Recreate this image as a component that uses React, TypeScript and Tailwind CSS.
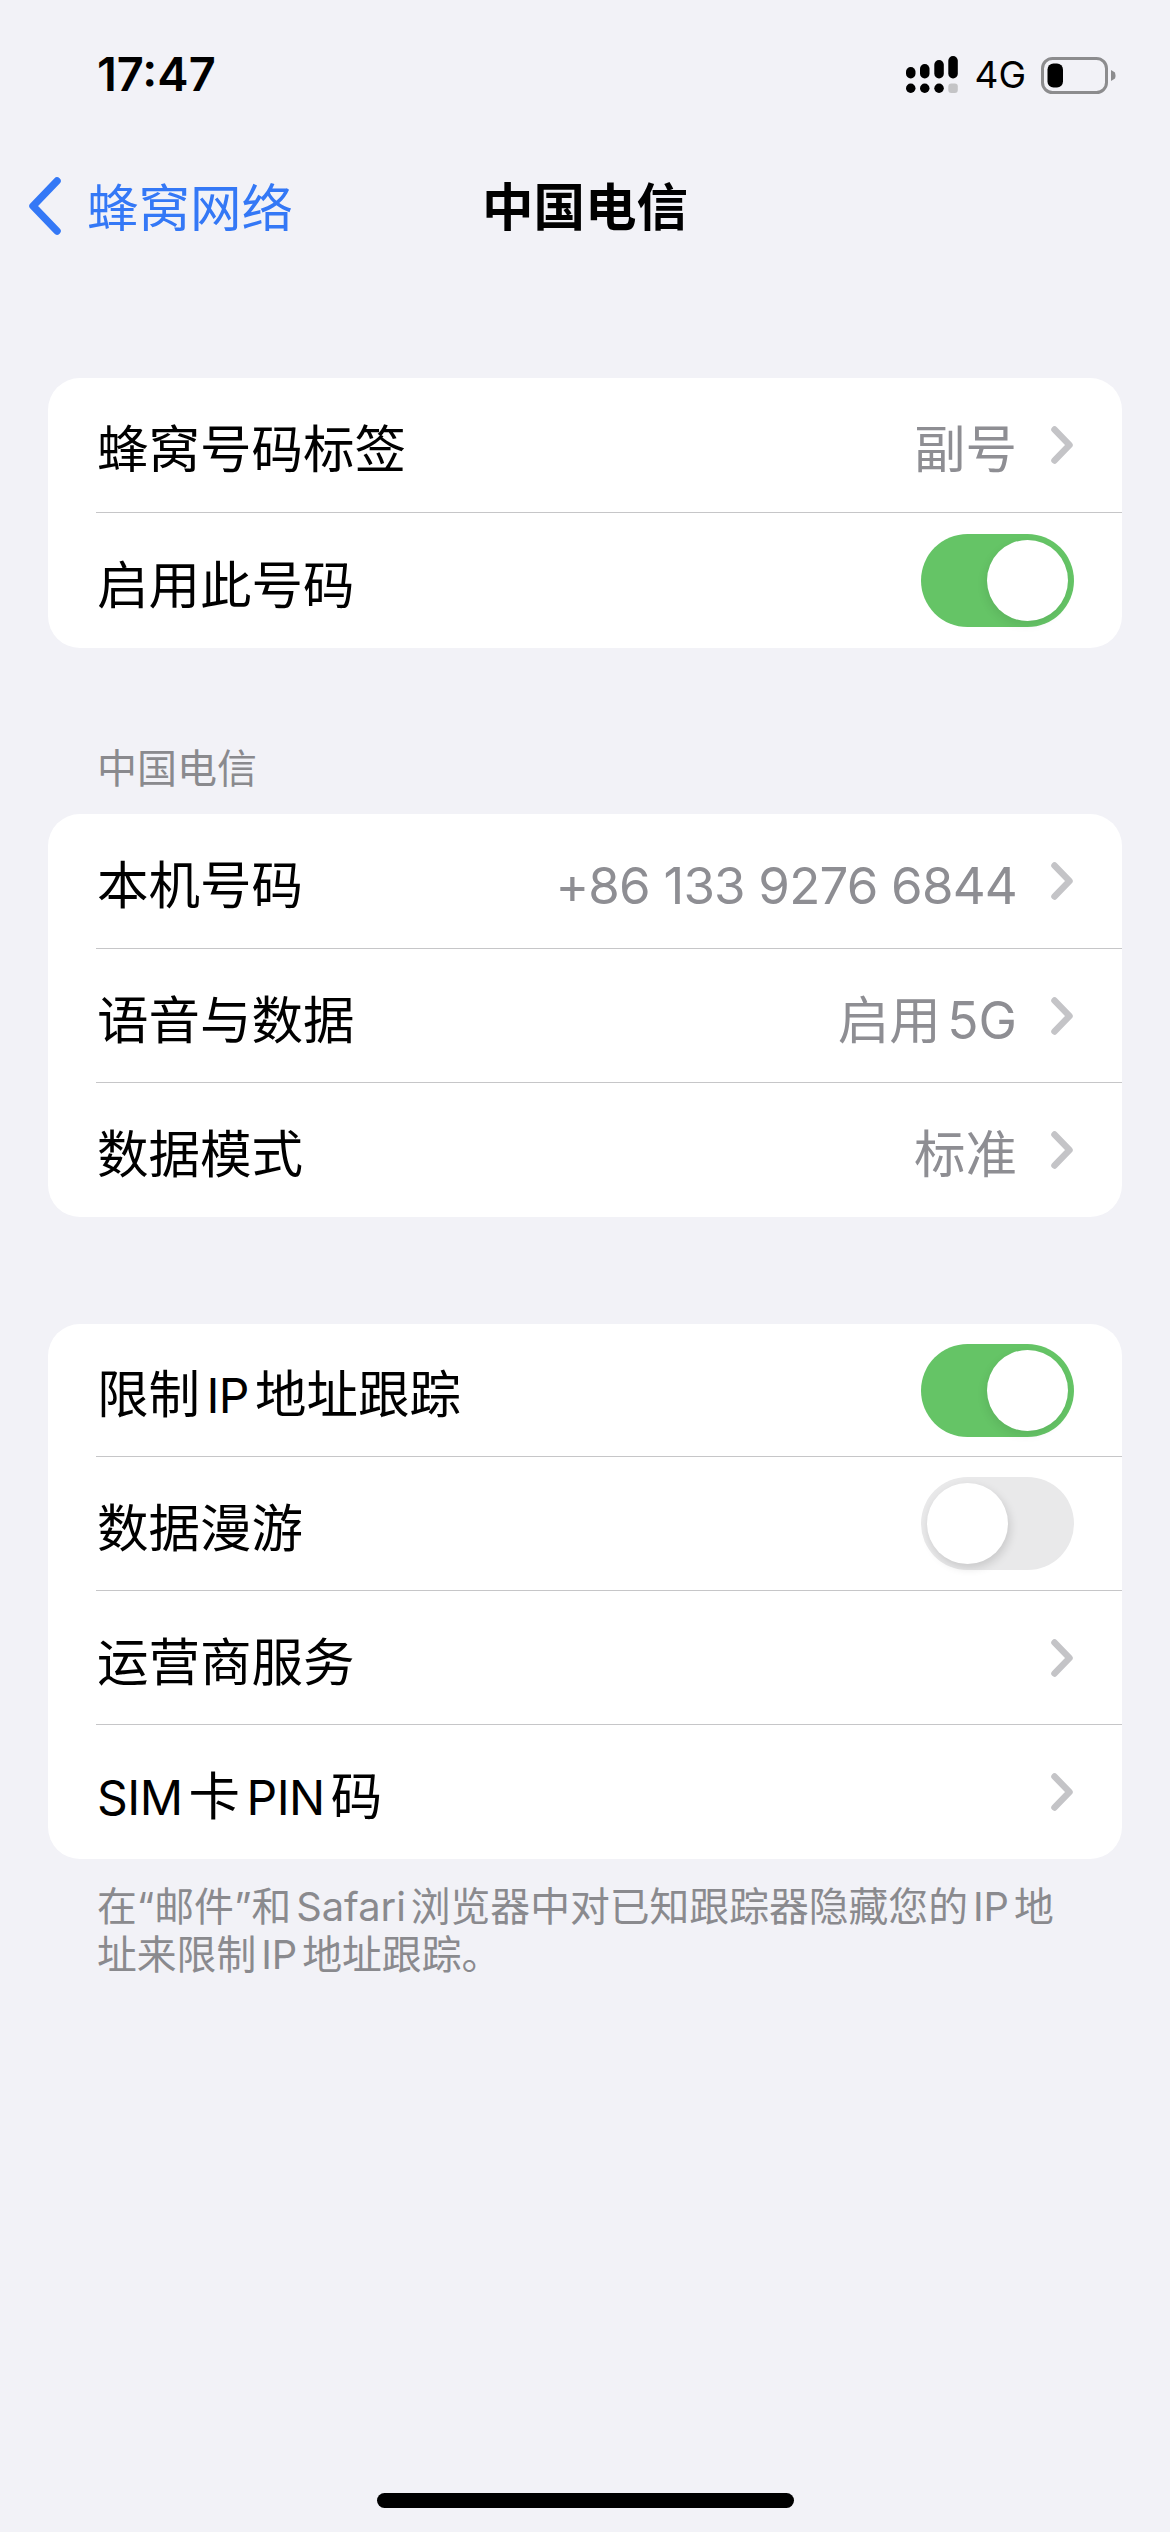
import type { ReactNode } from "react";

const CJK = "font-['Inter','Noto_Sans_CJK_SC',sans-serif]";

const Chevron = () => (
  <svg width="22" height="38" viewBox="0 0 22 38" fill="none" className="ml-[34px] mr-[1px]">
    <path d="M3.5 3.5 L18.5 19 L3.5 34.5" stroke="#c4c4c7" strokeWidth="6.5" strokeLinecap="round" strokeLinejoin="round" />
  </svg>
);

const Toggle = ({ on }: { on: boolean }) => (
  <div className={`relative h-[93px] w-[153px] rounded-full ${on ? "bg-[#65c466]" : "bg-[#e9e9ea]"}`}>
    <div
      className={`absolute top-[6px] h-[81px] w-[81px] rounded-full bg-white ${
        on ? "right-[6px] shadow-[-2px_4px_10px_rgba(0,0,0,0.08)]" : "left-[6px] shadow-[2px_4px_10px_rgba(0,0,0,0.14)]"
      }`}
    />
  </div>
);

// latin runs sit a bit smaller than the CJK around them
const Latin = ({ children }: { children: ReactNode }) => (
  <span className="text-[48px] tracking-[-0.5px]">{children}</span>
);

type RowProps = { label: ReactNode; value?: ReactNode; toggle?: boolean; height?: string };

const Row = ({ label, value, toggle, height = "h-[133px]" }: RowProps) => (
  <div className={`flex items-center justify-between pl-[49px] pr-[48px] text-[51.5px] text-black ${height}`}>
    <span className="pt-[10px]">{label}</span>
    {toggle !== undefined ? (
      <Toggle on={toggle} />
    ) : (
      <div className="flex items-center text-[#8e8e93]">
        {value && <span className="pt-[10px]">{value}</span>}
        <Chevron />
      </div>
    )}
  </div>
);

const Card = ({ children, className = "" }: { children: ReactNode; className?: string }) => (
  <div className={`mx-[48px] overflow-hidden rounded-[32px] bg-white ${className}`}>{children}</div>
);

const Divider = () => <div className="ml-[48px] h-px bg-[#c6c6c8]" />;

const SignalIcon = () => (
  <svg width="52" height="38" viewBox="0 0 52 38" fill="black">
    <rect x="0" y="11" width="9.5" height="11.5" rx="4.7" />
    <rect x="14" y="8" width="9.5" height="14.5" rx="4.7" />
    <rect x="28.3" y="4" width="9.5" height="18.5" rx="4.7" />
    <rect x="42.3" y="0" width="9.5" height="22.5" rx="4.7" />
    <rect x="0" y="27.5" width="9.5" height="9.5" rx="4.7" />
    <rect x="14" y="27.5" width="9.5" height="9.5" rx="4.7" />
    <rect x="28.3" y="27.5" width="9.5" height="9.5" rx="4.7" />
    <rect x="42.3" y="27.5" width="9.5" height="9.5" rx="3" fill="#c4c4c6" />
  </svg>
);

const BatteryIcon = () => (
  <svg width="75" height="37" viewBox="0 0 75 37" fill="none">
    <rect x="1.5" y="1.5" width="64" height="34" rx="10" stroke="#8c8c8e" strokeWidth="3" />
    <rect x="6.5" y="6.5" width="15.5" height="24" rx="6" fill="black" />
    <path d="M70 13 L74 15.5 Q75 18.5 74 21.5 L70 24 Z" fill="#8c8c8e" />
  </svg>
);

export default function App() {
  return (
    <div className={`relative min-h-[2532px] w-[1170px] bg-[#f2f2f7] [text-autospace:normal] ${CJK}`}>
      {/* Status bar */}
      <div className="flex h-[150px] items-center justify-between pl-[97px] pr-[54px]">
        <span className="pb-[2px] text-[47px] font-semibold text-black">17:47</span>
        <div className="flex items-center">
          <SignalIcon />
          <span className="ml-[16px] mr-[15px] text-[37px] text-black">4G</span>
          <BatteryIcon />
        </div>
      </div>

      {/* Nav */}
      <div className="grid h-[112px] grid-cols-[1fr_auto_1fr] items-center text-[51.5px]">
        <div className="flex items-center pl-[28px] text-[#3478f6]">
          <svg width="34" height="58" viewBox="0 0 34 58" fill="none">
            <path d="M29 4 L5 29 L29 54" stroke="#3478f6" strokeWidth="7.5" strokeLinecap="round" strokeLinejoin="round" />
          </svg>
          <span className="ml-[25px] pt-[6px]">蜂窝网络</span>
        </div>
        <span className="pt-[4px] font-semibold text-black">中国电信</span>
        <div />
      </div>

      <Card className="mt-[116px]">
        <Row label="蜂窝号码标签" value="副号" height="h-[134px]" />
        <Divider />
        <Row label="启用此号码" toggle={true} height="h-[135px]" />
      </Card>

      <div className="mb-[22px] mt-[98px] pl-[97px] text-[40px] leading-[46px] text-[#8a8a8e]">中国电信</div>

      <Card>
        <Row
          label="本机号码"
          value={<span className="text-[51px] tracking-[-0.8px]">+86 133 9276 6844</span>}
          height="h-[134px]"
        />
        <Divider />
        <Row label="语音与数据" value="启用5G" />
        <Divider />
        <Row label="数据模式" value="标准" height="h-[134px]" />
      </Card>

      <Card className="mt-[107px]">
        <Row label={<>限制<Latin>IP</Latin>地址跟踪</>} toggle={true} height="h-[132px]" />
        <Divider />
        <Row label="数据漫游" toggle={false} />
        <Divider />
        <Row label="运营商服务" />
        <Divider />
        <Row label={<><Latin>SIM</Latin>卡<Latin>PIN</Latin>码</>} height="h-[134px]" />
      </Card>

      <p className="mt-[24px] pl-[97px] pr-[90px] text-[39.8px] leading-[48px] text-[#8a8a8e]">
        在“邮件”和Safari浏览器中对已知跟踪器隐藏您的IP地址来限制IP地址跟踪。
      </p>

      {/* Home indicator */}
      <div className="absolute bottom-[24px] left-[377px] h-[15px] w-[417px] rounded-[8px] bg-black" />
    </div>
  );
}
